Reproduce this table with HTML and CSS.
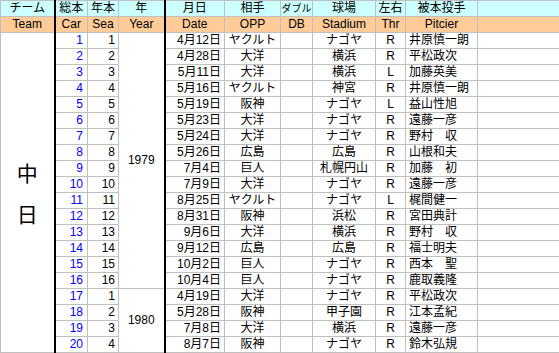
FILE: index.html
```
<!DOCTYPE html>
<html lang="ja">
<head>
<meta charset="utf-8">
<link rel="stylesheet" href="styles.css">
</head>
<body>
<table class="sheet">
<colgroup>
<col class="c-team"><col class="c-car"><col class="c-sea"><col class="c-year"><col class="c-date"><col class="c-opp"><col class="c-db"><col class="c-std"><col class="c-thr"><col class="c-pit"><col class="c-rest">
</colgroup>
<tr class="h1">
<td class="sep">チーム</td><td>総本</td><td>年本</td><td class="sep">年</td><td>月日</td><td>相手</td><td class="small">ダブル</td><td>球場</td><td>左右</td><td>被本投手</td><td></td>
</tr>
<tr class="h2">
<td class="sep">Team</td><td>Car</td><td>Sea</td><td class="sep">Year</td><td>Date</td><td>OPP</td><td>DB</td><td>Stadium</td><td>Thr</td><td>Pitcier</td><td></td>
</tr>
<tr><td class="team sep" rowspan="20"><span>中</span><span>日</span></td><td class="car">1</td><td class="num">1</td><td class="year sep" rowspan="16">1979</td><td class="num">4月12日</td><td class="ctr">ヤクルト</td><td></td><td class="ctr">ナゴヤ</td><td class="ctr">R</td><td class="pit">井原慎一朗</td><td></td></tr>
<tr><td class="car">2</td><td class="num">2</td><td class="num">4月28日</td><td class="ctr">大洋</td><td></td><td class="ctr">横浜</td><td class="ctr">R</td><td class="pit">平松政次</td><td></td></tr>
<tr><td class="car">3</td><td class="num">3</td><td class="num">5月11日</td><td class="ctr">大洋</td><td></td><td class="ctr">横浜</td><td class="ctr">L</td><td class="pit">加藤英美</td><td></td></tr>
<tr><td class="car">4</td><td class="num">4</td><td class="num">5月16日</td><td class="ctr">ヤクルト</td><td></td><td class="ctr">神宮</td><td class="ctr">R</td><td class="pit">井原慎一朗</td><td></td></tr>
<tr><td class="car">5</td><td class="num">5</td><td class="num">5月19日</td><td class="ctr">阪神</td><td></td><td class="ctr">ナゴヤ</td><td class="ctr">L</td><td class="pit">益山性旭</td><td></td></tr>
<tr><td class="car">6</td><td class="num">6</td><td class="num">5月23日</td><td class="ctr">大洋</td><td></td><td class="ctr">ナゴヤ</td><td class="ctr">R</td><td class="pit">遠藤一彦</td><td></td></tr>
<tr><td class="car">7</td><td class="num">7</td><td class="num">5月24日</td><td class="ctr">大洋</td><td></td><td class="ctr">ナゴヤ</td><td class="ctr">R</td><td class="pit">野村　収</td><td></td></tr>
<tr><td class="car">8</td><td class="num">8</td><td class="num">5月26日</td><td class="ctr">広島</td><td></td><td class="ctr">広島</td><td class="ctr">R</td><td class="pit">山根和夫</td><td></td></tr>
<tr><td class="car">9</td><td class="num">9</td><td class="num">7月4日</td><td class="ctr">巨人</td><td></td><td class="ctr">札幌円山</td><td class="ctr">R</td><td class="pit">加藤　初</td><td></td></tr>
<tr><td class="car">10</td><td class="num">10</td><td class="num">7月9日</td><td class="ctr">大洋</td><td></td><td class="ctr">ナゴヤ</td><td class="ctr">R</td><td class="pit">遠藤一彦</td><td></td></tr>
<tr><td class="car">11</td><td class="num">11</td><td class="num">8月25日</td><td class="ctr">ヤクルト</td><td></td><td class="ctr">ナゴヤ</td><td class="ctr">L</td><td class="pit">梶間健一</td><td></td></tr>
<tr><td class="car">12</td><td class="num">12</td><td class="num">8月31日</td><td class="ctr">阪神</td><td></td><td class="ctr">浜松</td><td class="ctr">R</td><td class="pit">宮田典計</td><td></td></tr>
<tr><td class="car">13</td><td class="num">13</td><td class="num">9月6日</td><td class="ctr">大洋</td><td></td><td class="ctr">横浜</td><td class="ctr">R</td><td class="pit">野村　収</td><td></td></tr>
<tr><td class="car">14</td><td class="num">14</td><td class="num">9月12日</td><td class="ctr">広島</td><td></td><td class="ctr">広島</td><td class="ctr">R</td><td class="pit">福士明夫</td><td></td></tr>
<tr><td class="car">15</td><td class="num">15</td><td class="num">10月2日</td><td class="ctr">巨人</td><td></td><td class="ctr">ナゴヤ</td><td class="ctr">R</td><td class="pit">西本　聖</td><td></td></tr>
<tr><td class="car">16</td><td class="num">16</td><td class="num">10月4日</td><td class="ctr">巨人</td><td></td><td class="ctr">ナゴヤ</td><td class="ctr">R</td><td class="pit">鹿取義隆</td><td></td></tr>
<tr class="split"><td class="car">17</td><td class="num">1</td><td class="year sep" rowspan="4">1980</td><td class="num">4月19日</td><td class="ctr">大洋</td><td></td><td class="ctr">ナゴヤ</td><td class="ctr">R</td><td class="pit">平松政次</td><td></td></tr>
<tr><td class="car">18</td><td class="num">2</td><td class="num">5月28日</td><td class="ctr">阪神</td><td></td><td class="ctr">甲子園</td><td class="ctr">R</td><td class="pit">江本孟紀</td><td></td></tr>
<tr><td class="car">19</td><td class="num">3</td><td class="num">7月8日</td><td class="ctr">大洋</td><td></td><td class="ctr">横浜</td><td class="ctr">R</td><td class="pit">遠藤一彦</td><td></td></tr>
<tr><td class="car">20</td><td class="num">4</td><td class="num">8月7日</td><td class="ctr">阪神</td><td></td><td class="ctr">ナゴヤ</td><td class="ctr">R</td><td class="pit">鈴木弘規</td><td></td></tr>
</table>
</body>
</html>
```
FILE: styles.css
```
html, body {
  margin: 0;
  padding: 0;
  background: #ffffff;
}
.sheet {
  border-collapse: collapse;
  table-layout: fixed;
  width: 559px;
  font-family: "Liberation Sans", "Noto Sans CJK JP", sans-serif;
  font-size: 12px;
  color: #000;
}
.c-team { width: 54px; }
.c-car { width: 33px; }
.c-sea { width: 31px; }
.c-year { width: 46px; }
.c-date { width: 60px; }
.c-opp { width: 56px; }
.c-db { width: 32px; }
.c-std { width: 63px; }
.c-thr { width: 30px; }
.c-pit { width: 72px; }
.c-rest { width: 82px; }
.sheet td {
  border: 1px solid #c0c0c0;
  height: 15px;
  padding: 0;
  line-height: 15px;
  white-space: nowrap;
  overflow: hidden;
}
.h1 td {
  background: #ccffff;
  text-align: center;
}
.h2 td {
  background: #ffcc99;
  text-align: center;
}
.h1 .small {
  font-size: 10px;
}
.sheet td.sep {
  border-right: 2px solid #000;
}
.car {
  color: #0000ff;
  text-align: right;
  padding-right: 4px !important;
}
.num {
  text-align: right;
  padding-right: 3px !important;
}
.ctr {
  text-align: center;
}
.pit {
  text-align: left;
  padding-left: 3px !important;
}
.year {
  text-align: center;
  vertical-align: middle;
}
.team {
  text-align: center;
  vertical-align: middle;
  font-family: "Noto Sans CJK JP", sans-serif;
  font-size: 21px;
}
.team span {
  display: block;
  line-height: 41px;
}
.sheet .split td {
  border-top: 1px solid #000;
}
```
